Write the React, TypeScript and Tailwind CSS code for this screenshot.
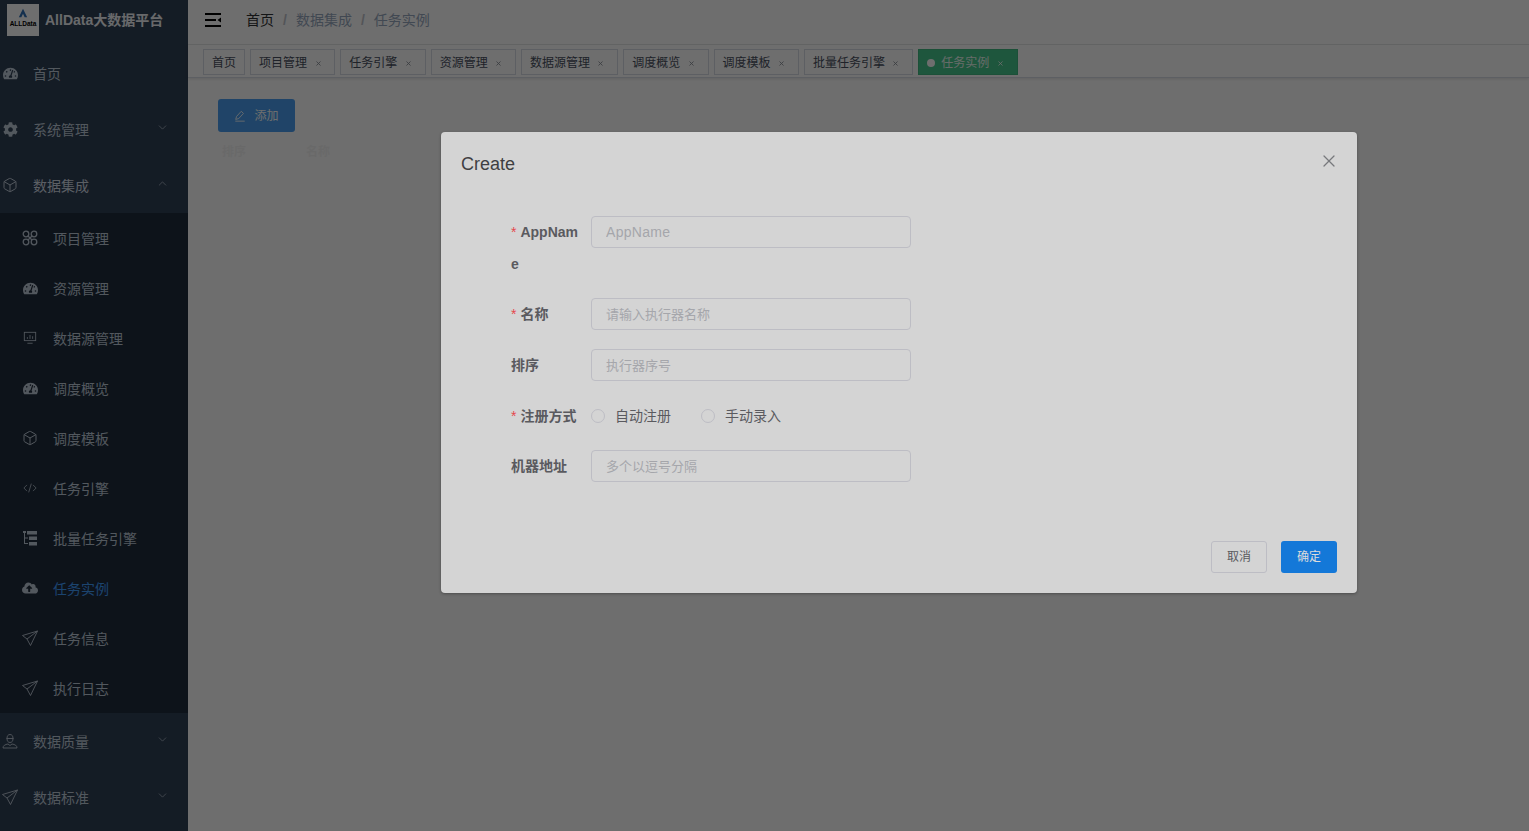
import type { ReactNode } from "react";
import { Box, ChevronDown, ChevronUp, X } from "lucide-react";
import { FaCloudUploadAlt, FaCog, FaTachometerAlt } from "react-icons/fa";

const font = "font-['Liberation_Sans','Noto_Sans_CJK_SC',sans-serif]";

function Plane() {
  return (
    <svg viewBox="0 0 16 16" className="h-4 w-4" fill="none" stroke="currentColor" strokeWidth="0.9">
      <path d="M15.500 1 .5 5.500l4.500 3.500 3.500 6.500zM15.500 1 5 9" />
    </svg>
  );
}

function Monitor() {
  return (
    <svg viewBox="0 0 16 16" className="h-[14px] w-[14px]" fill="none" stroke="currentColor">
      <rect x="1.500" y="1.500" width="13" height="9.500" />
      <path d="M5 14h6M5 9V7M8 9V4.500M11 9V6" />
    </svg>
  );
}

function TreeTable() {
  return (
    <svg viewBox="0 0 16 16" className="h-4 w-4" fill="currentColor">
      <path d="M1 1h3v2H1zM5 1h10v3.500H5zM7 6.500h8v3.500H7zM7 12h8v3.500H7z" />
      <path d="M2 3h1v10h3v1H2zM3 7.500h3v1H3z" />
    </svg>
  );
}

function Code() {
  return (
    <svg viewBox="0 0 16 16" className="h-[14px] w-[14px]" fill="none" stroke="currentColor" strokeWidth="0.9">
      <path d="M4.500 4.500 1 8l3.500 3.500M11.500 4.500 15 8l-3.500 3.500M9.500 3l-3 10" />
    </svg>
  );
}

function Person() {
  return (
    <svg viewBox="0 0 16 16" className="h-4 w-4" fill="none" stroke="currentColor" strokeWidth="0.9">
      <path d="M5 5.500C5 3 6 1.500 8 1.500S11 3 11 5.500 10 9.500 8 9.500 5 8 5 5.500z" />
      <path d="M4.500 5.500h7M1 15c0-2.500 2-3.500 5-4l2 1.500 2-1.500c3 .5 5 1.500 5 4z" />
    </svg>
  );
}

function Drone() {
  return (
    <svg viewBox="0 0 16 16" className="h-4 w-4" fill="none" stroke="currentColor" strokeWidth="1.3">
      <circle cx="4" cy="4" r="2.800" />
      <circle cx="12" cy="4" r="2.800" />
      <circle cx="4" cy="12" r="2.800" />
      <circle cx="12" cy="12" r="2.800" />
      <path d="M6 6l4 4M10 6l-4 4" />
    </svg>
  );
}

const subMenu: { label: string; icon: ReactNode; active?: boolean }[] = [
  { label: "项目管理", icon: <Drone /> },
  { label: "资源管理", icon: <FaTachometerAlt className="h-[15px] w-[15px]" /> },
  { label: "数据源管理", icon: <Monitor /> },
  { label: "调度概览", icon: <FaTachometerAlt className="h-[15px] w-[15px]" /> },
  { label: "调度模板", icon: <Box className="h-4 w-4" strokeWidth={1.5} /> },
  { label: "任务引擎", icon: <Code /> },
  { label: "批量任务引擎", icon: <TreeTable /> },
  { label: "任务实例", icon: <FaCloudUploadAlt className="h-4 w-4" />, active: true },
  { label: "任务信息", icon: <Plane /> },
  { label: "执行日志", icon: <Plane /> },
];

const tabs = [
  { label: "首页", closable: false },
  { label: "项目管理", closable: true },
  { label: "任务引擎", closable: true },
  { label: "资源管理", closable: true },
  { label: "数据源管理", closable: true },
  { label: "调度概览", closable: true },
  { label: "调度模板", closable: true },
  { label: "批量任务引擎", closable: true },
];

function TopItem({
  label,
  icon,
  open,
  arrow = true,
  strong = false,
}: {
  label: string;
  icon: ReactNode;
  open?: boolean;
  arrow?: boolean;
  strong?: boolean;
}) {
  return (
    <div className="flex h-14 items-center text-sm text-[#bfcbd9]">
      <span className="flex w-[20px] justify-center">{icon}</span>
      <span className={`ml-[13px] flex-1 pt-[2px] ${strong ? "text-[#d4dde8]" : ""}`}>{label}</span>
      {arrow &&
        (open ? (
          <ChevronUp className="mr-[19px] mb-[3px] h-[13px] w-[13px]" strokeWidth={1.25} />
        ) : (
          <ChevronDown className="mr-[19px] mb-[3px] h-[13px] w-[13px]" strokeWidth={1.25} />
        ))}
    </div>
  );
}

function Sidebar() {
  return (
    <aside className="h-full w-[188px] shrink-0 overflow-hidden bg-[#304156]">
      <div className="flex h-[45px] items-start pl-[7px] pt-[4px]">
        <div className="flex h-8 w-8 flex-col items-center bg-white pt-[4px]">
          <svg viewBox="0 0 12 12" className="h-[10px] w-[10px]">
            <path d="M6 1 11 11H8L6 7 4 11H1z" fill="#2f6fb5" />
          </svg>
          <span className="mt-[2px] whitespace-nowrap text-[6.500px] font-bold leading-[8px] text-black">ALLData</span>
        </div>
        <span className="ml-[6px] mt-[7px] whitespace-nowrap text-sm font-bold leading-[18px] text-[#f0f4f8]">
          AllData大数据平台
        </span>
      </div>
      <TopItem label="首页" arrow={false} icon={<FaTachometerAlt className="h-[15px] w-[15px]" />} />
      <TopItem label="系统管理" icon={<FaCog className="h-[15px] w-[15px]" />} />
      <TopItem label="数据集成" open strong icon={<Box className="h-4 w-4" strokeWidth={1.5} />} />
      <div className="bg-[#1f2d3d]">
        {subMenu.map((item) => (
          <div
            key={item.label}
            className={`flex h-[50px] items-center text-sm ${item.active ? "text-[#409eff]" : "text-[#bfcbd9]"}`}
          >
            <span className={`ml-[20px] flex w-[20px] justify-center ${item.active ? "text-[#bfcbd9]" : ""}`}>
              {item.icon}
            </span>
            <span className="ml-[13px] pt-[2px]">{item.label}</span>
          </div>
        ))}
      </div>
      <TopItem label="数据质量" icon={<Person />} />
      <TopItem label="数据标准" icon={<Plane />} />
    </aside>
  );
}

function TopBar() {
  return (
    <header className="flex h-[45px] items-center border-b border-[#e9eaeb] pb-[5px] pl-[17px] text-sm">
      <svg viewBox="0 0 16 14" className="h-[14px] w-4 text-black" fill="currentColor">
        <path d="M0 0h16v2H0zM0 6h11v2H0zM0 12h16v2H0zM16 4.500v5L12.500 7z" />
      </svg>
      <div className="ml-[25px] flex items-center">
        <span className="text-[#303133]">首页</span>
        <span className="mx-[9px] font-bold text-[#c0c4cc]">/</span>
        <span className="text-[#97a8be]">数据集成</span>
        <span className="mx-[9px] font-bold text-[#c0c4cc]">/</span>
        <span className="text-[#97a8be]">任务实例</span>
      </div>
    </header>
  );
}

function TabBar() {
  return (
    <div className="flex h-[33px] items-start gap-[5px] border-b border-[#d8dce5] pl-[15px] pt-[4px] shadow-[0_1px_3px_rgba(0,0,0,0.12)]">
      {tabs.map((tab) => (
        <div
          key={tab.label}
          className="flex h-[26px] items-center border border-[#d8dce5] bg-white px-2 pt-[2px] text-xs text-[#495060]"
        >
          {tab.label}
          {tab.closable && (
            <X className="ml-[3.500px] mr-[0.800px] h-[15px] w-[15px] p-[4px] text-[#8a9098]" strokeWidth={3} />
          )}
        </div>
      ))}
      <div className="flex h-[26px] items-center border border-[#42b983] bg-[#47c78d] px-2 pt-[2px] text-xs text-white/90">
        <span className="mr-[6px] h-2 w-2 rounded-full bg-white" />
        任务实例
        <X className="ml-[3.500px] mr-[0.800px] h-[15px] w-[15px] p-[4px]" strokeWidth={3} />
      </div>
    </div>
  );
}

function Field({
  label,
  placeholder,
  required,
  className,
  inputClass = "text-[13px]",
}: {
  label: string;
  placeholder: string;
  required?: boolean;
  className: string;
  inputClass?: string;
}) {
  return (
    <div className={`flex ${className}`}>
      <label className="w-20 shrink-0 break-all pr-3 text-sm font-bold leading-8 text-[#5a5a5f]">
        {required && <span className="mr-1 font-normal text-[#e5484d]">*</span>}
        {label}
      </label>
      <input
        readOnly
        placeholder={placeholder}
        className={`h-8 w-[320px] rounded border border-[#bdbdc4] bg-transparent px-[14px] outline-none placeholder:text-[#a5a6ab] ${inputClass}`}
      />
    </div>
  );
}

function Radio({ label, className = "" }: { label: string; className?: string }) {
  return (
    <span className={`flex items-center ${className}`}>
      <span className="h-[14px] w-[14px] rounded-full border border-[#bdbdc4]" />
      <span className="ml-[10px] text-sm font-normal text-[#5a5a5f]">{label}</span>
    </span>
  );
}

function Dialog() {
  return (
    <div className="absolute left-[441px] top-[132px] h-[461px] w-[916px] rounded-sm bg-[#d4d4d4] shadow-[0_1px_3px_rgba(0,0,0,0.3)]">
      <div className="relative px-5 pt-5">
        <span className="text-lg leading-6 text-[#3f3f42]">Create</span>
        <X className="absolute right-[18px] top-[19px] h-5 w-5 text-[#77787c]" strokeWidth={1.5} />
      </div>
      <form className="pl-[70px] pt-[39px]">
        <Field
          required
          label="AppName"
          placeholder="AppName"
          className="mb-[18px]"
          inputClass="text-sm tracking-[0.3px]"
        />
        <Field required label="名称" placeholder="请输入执行器名称" className="mb-[19px]" />
        <Field label="排序" placeholder="执行器序号" className="mb-[19px]" />
        <div className="mb-[18px] flex h-8 items-center">
          <label className="w-20 shrink-0 text-sm font-bold text-[#5a5a5f]">
            <span className="mr-1 font-normal text-[#e5484d]">*</span>
            注册方式
          </label>
          <Radio label="自动注册" />
          <Radio label="手动录入" className="ml-[30px]" />
        </div>
        <Field label="机器地址" placeholder="多个以逗号分隔" className="" />
      </form>
      <div className="mt-[59px] flex justify-end gap-[14px] pr-5">
        <button className="h-8 w-14 rounded-[3px] border border-[#bdbdc4] text-xs text-[#5a5a5f]">取消</button>
        <button className="h-8 w-14 rounded-[3px] bg-[#1478d8] text-xs text-[#dcdcdc]">确定</button>
      </div>
    </div>
  );
}

export default function App() {
  return (
    <div className={`${font} relative flex h-screen overflow-hidden bg-white`}>
      <Sidebar />
      <main className="min-w-0 flex-1">
        <TopBar />
        <TabBar />
        <div className="pl-[30px] pt-[21px]">
          <button className="flex h-[33px] w-[77px] items-center justify-center rounded-[3px] bg-[#4a9ff0] text-xs text-white">
            <svg viewBox="0 0 14 14" className="mr-2 h-3 w-3" fill="none" stroke="currentColor">
              <path d="M2 11 3 7.500 8.500 1.500 11 4 5.500 10zM1.500 13h11" />
            </svg>
            添加
          </button>
          <div className="mt-[12px] flex pl-[4px] text-xs font-bold text-[#f4f4f4]">
            <span className="w-[84px]">排序</span>
            <span>名称</span>
          </div>
        </div>
      </main>
      <div className="absolute inset-0 bg-black/[0.57]" />
      <Dialog />
    </div>
  );
}
